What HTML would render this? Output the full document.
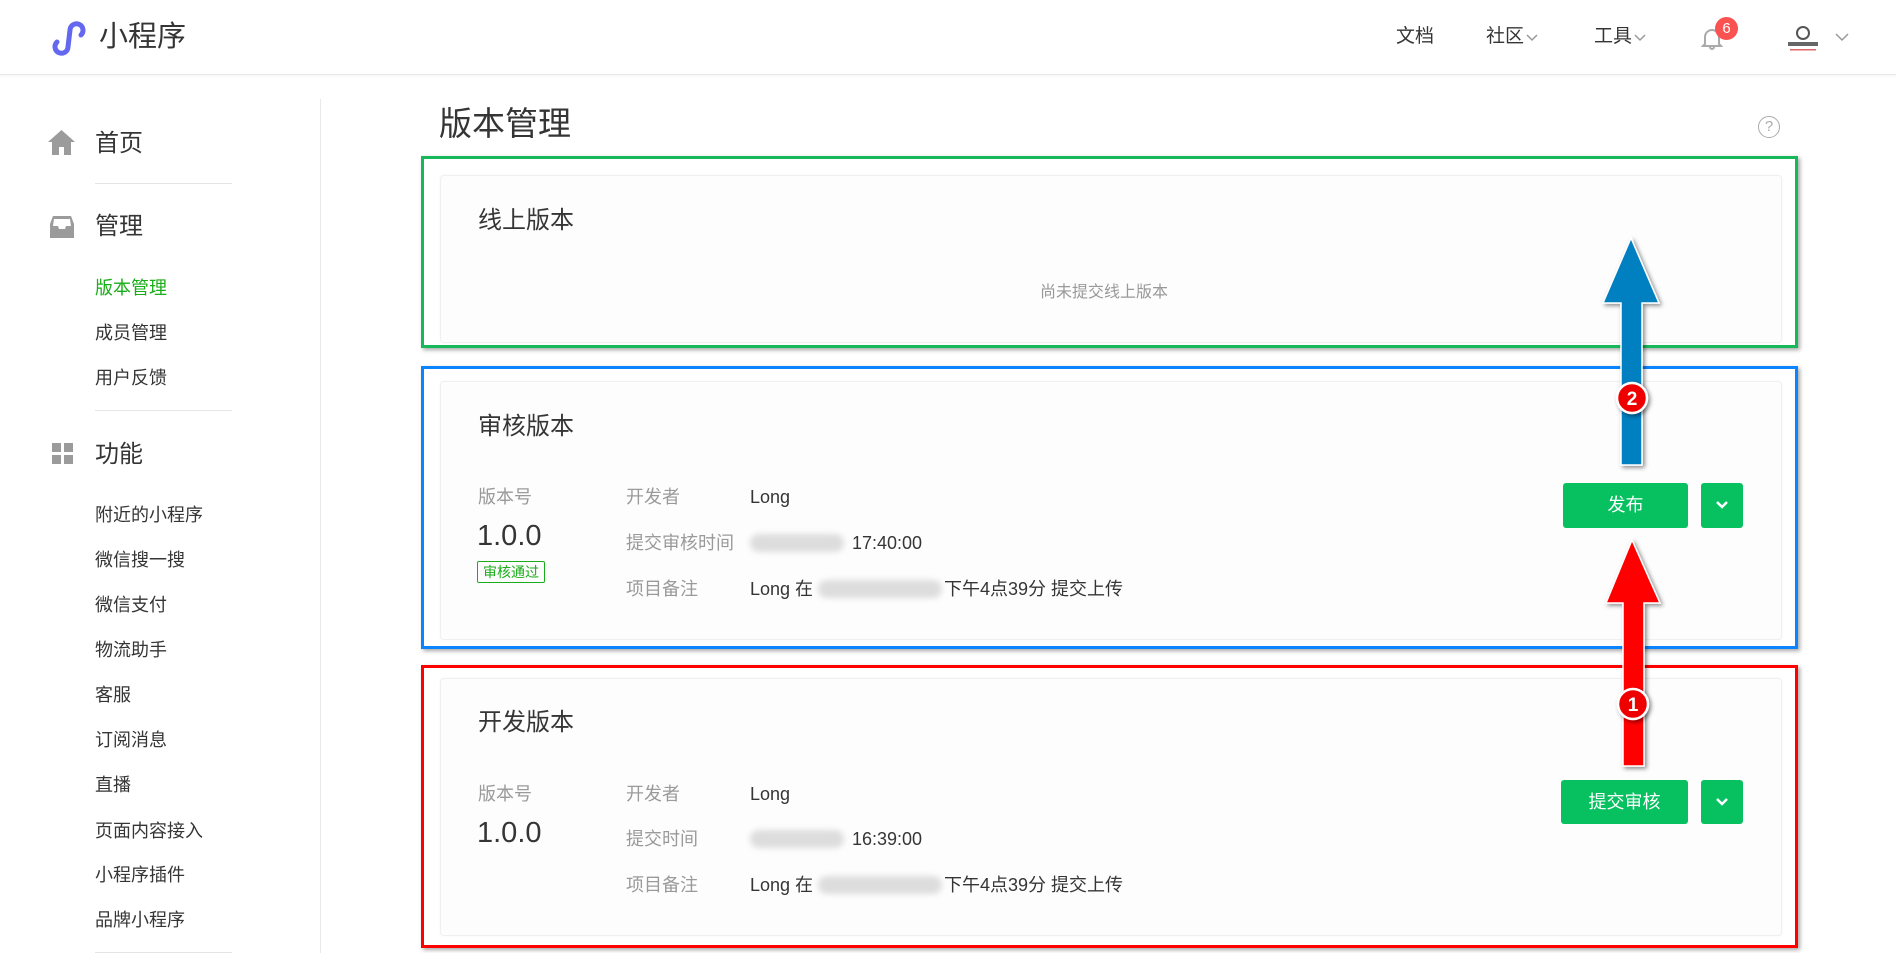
<!DOCTYPE html>
<html><head><meta charset="utf-8">
<style>
*{margin:0;padding:0;box-sizing:border-box}
body{width:1896px;height:953px;overflow:hidden;background:#fff;font-family:"Liberation Sans","Noto Sans CJK SC",sans-serif;color:#353535;position:relative}
.a{position:absolute;white-space:nowrap}
.hdr{position:absolute;left:0;top:0;width:1896px;height:75px;background:#fff;border-bottom:1px solid #e7e7e7;box-shadow:0 1px 3px rgba(0,0,0,.05)}
.side{font-size:18px;color:#353535;line-height:20px}
.card{position:absolute;background:#fdfdfd;border:1px solid #f0f0f0;border-radius:4px;box-shadow:0 0 3px rgba(0,0,0,.04)}
.lbl{color:#9a9a9a;font-size:18px;line-height:20px}
.val{color:#353535;font-size:18px;line-height:20px}
.blur{position:absolute;height:18px;background:#ddd;border-radius:9px;filter:blur(3px)}
.btn{position:absolute;background:#07c160;border-radius:3px;color:#fff;font-size:18px;text-align:center}
.box{position:absolute;border:3px solid;box-shadow:2px 2px 4px rgba(0,0,0,.35)}
</style></head><body>

<div class="hdr"></div>
<svg class="a" style="left:52px;top:20px" width="34" height="36" viewBox="0 0 34 36"><path d="M5,22 A6.5,6.5 0 1 0 16,27 L18,10 A6.5,6.5 0 1 1 29,15" fill="none" stroke="#6467f0" stroke-width="5" stroke-linecap="round"/></svg>
<div class="a" style="left:99px;top:20px;font-size:29px;line-height:34px;color:#353535">小程序</div>

<div class="a" style="left:1396px;top:26px;font-size:19px;line-height:22px">文档</div>
<div class="a" style="left:1486px;top:26px;font-size:19px;line-height:22px">社区</div>
<svg class="a" style="left:1526px;top:34px" width="12" height="8"><path d="M1,1 L6,6 L11,1" fill="none" stroke="#999" stroke-width="1.5"/></svg>
<div class="a" style="left:1594px;top:26px;font-size:19px;line-height:22px">工具</div>
<svg class="a" style="left:1634px;top:34px" width="12" height="8"><path d="M1,1 L6,6 L11,1" fill="none" stroke="#999" stroke-width="1.5"/></svg>
<svg class="a" style="left:1701px;top:26px" width="22" height="24" viewBox="0 0 22 24"><path d="M4,18 L4,11 A7,7 0 0 1 18,11 L18,18 L20,20 L2,20 Z M9,21 A2,2 0 0 0 13,21" fill="none" stroke="#aaa" stroke-width="2"/></svg>
<div class="a" style="left:1715px;top:17px;width:23px;height:23px;border-radius:50%;background:#fa5151;color:#fff;font-size:15px;line-height:23px;text-align:center">6</div>
<svg class="a" style="left:1784px;top:24px" width="38" height="30"><circle cx="19" cy="9" r="6" fill="none" stroke="#555" stroke-width="2"/><rect x="4" y="18" width="30" height="4" fill="#666"/><rect x="6" y="25" width="26" height="1.5" fill="#d66"/></svg>
<svg class="a" style="left:1835px;top:33px" width="14" height="9"><path d="M1,1 L7,7 L13,1" fill="none" stroke="#999" stroke-width="1.5"/></svg>

<!-- sidebar -->
<div class="a" style="left:320px;top:99px;width:1px;height:854px;background:#e8e8e8"></div>
<svg class="a" style="left:48px;top:130px" width="27" height="25" viewBox="0 0 27 25"><path d="M13.5,0 L27,12 L23,12 L23,25 L16,25 L16,17 L11,17 L11,25 L4,25 L4,12 L0,12 Z" fill="#9b9b9b"/></svg>
<div class="a" style="left:95px;top:131px;font-size:24px;line-height:26px">首页</div>
<div class="a" style="left:95px;top:183px;width:137px;height:1px;background:#e5e5e5"></div>
<svg class="a" style="left:50px;top:216px" width="24" height="22" viewBox="0 0 24 22"><path d="M3,0 L21,0 L24,8 L24,22 L0,22 L0,8 Z" fill="#9b9b9b"/><path d="M4,3 L20,3 L21,10 L16,10 L15,13 L9,13 L8,10 L3,10 Z" fill="#fff"/></svg>
<div class="a" style="left:95px;top:214px;font-size:24px;line-height:26px">管理</div>
<div class="a side" style="left:95px;top:278px;color:#1aad19">版本管理</div>
<div class="a side" style="left:95px;top:323px">成员管理</div>
<div class="a side" style="left:95px;top:368px">用户反馈</div>
<div class="a" style="left:95px;top:410px;width:137px;height:1px;background:#e5e5e5"></div>
<svg class="a" style="left:52px;top:443px" width="22" height="22"><rect x="0" y="0" width="9" height="9" fill="#9b9b9b"/><rect x="12" y="0" width="9" height="9" fill="#9b9b9b"/><rect x="0" y="12" width="9" height="9" fill="#9b9b9b"/><rect x="12" y="12" width="9" height="9" fill="#9b9b9b"/></svg>
<div class="a" style="left:95px;top:442px;font-size:24px;line-height:26px">功能</div>
<div class="a side" style="left:95px;top:505px">附近的小程序</div>
<div class="a side" style="left:95px;top:550px">微信搜一搜</div>
<div class="a side" style="left:95px;top:595px">微信支付</div>
<div class="a side" style="left:95px;top:640px">物流助手</div>
<div class="a side" style="left:95px;top:685px">客服</div>
<div class="a side" style="left:95px;top:730px">订阅消息</div>
<div class="a side" style="left:95px;top:775px">直播</div>
<div class="a side" style="left:95px;top:821px">页面内容接入</div>
<div class="a side" style="left:95px;top:865px">小程序插件</div>
<div class="a side" style="left:95px;top:910px">品牌小程序</div>
<div class="a" style="left:95px;top:952px;width:137px;height:1px;background:#e5e5e5"></div>

<!-- main -->
<div class="a" style="left:439px;top:105px;font-size:33px;line-height:38px;color:#353535">版本管理</div>
<div class="a" style="left:1758px;top:116px;width:22px;height:22px;border:1.5px solid #aaa;border-radius:50%;color:#aaa;font-size:15px;line-height:19px;text-align:center">?</div>

<!-- online card -->
<div class="card" style="left:440px;top:175px;width:1342px;height:168px"></div>
<div class="a" style="left:478px;top:208px;font-size:24px;line-height:26px">线上版本</div>
<div class="a" style="left:1040px;top:283px;font-size:16px;line-height:20px;color:#999">尚未提交线上版本</div>
<div class="box" style="left:421px;top:156px;width:1377px;height:192px;border-color:#17b859"></div>

<!-- review card -->
<div class="card" style="left:440px;top:381px;width:1342px;height:259px"></div>
<div class="a" style="left:478px;top:414px;font-size:24px;line-height:26px">审核版本</div>
<div class="a lbl" style="left:478px;top:487px">版本号</div>
<div class="a" style="left:477px;top:520px;font-size:29px;line-height:32px;color:#353535">1.0.0</div>
<div class="a" style="left:477px;top:561px;width:68px;height:22px;border:1px solid #1aad19;border-radius:2px;color:#1aad19;font-size:14px;line-height:20px;text-align:center">审核通过</div>
<div class="a lbl" style="left:626px;top:487px">开发者</div>
<div class="a val" style="left:750px;top:487px">Long</div>
<div class="a lbl" style="left:626px;top:533px">提交审核时间</div>
<div class="blur" style="left:750px;top:534px;width:94px"></div>
<div class="a val" style="left:852px;top:533px">17:40:00</div>
<div class="a lbl" style="left:626px;top:579px">项目备注</div>
<div class="a val" style="left:750px;top:579px">Long 在</div>
<div class="blur" style="left:818px;top:580px;width:124px"></div>
<div class="a val" style="left:944px;top:579px">下午4点39分 提交上传</div>
<div class="btn" style="left:1563px;top:483px;width:125px;height:45px;line-height:45px">发布</div>
<div class="btn" style="left:1701px;top:483px;width:42px;height:45px"><svg style="margin-top:17px" width="14" height="10"><path d="M2,2 L7,7 L12,2" fill="none" stroke="#fff" stroke-width="2.5"/></svg></div>
<div class="box" style="left:421px;top:366px;width:1377px;height:283px;border-color:#0a84ff"></div>

<!-- dev card -->
<div class="card" style="left:440px;top:678px;width:1342px;height:258px"></div>
<div class="a" style="left:478px;top:710px;font-size:24px;line-height:26px">开发版本</div>
<div class="a lbl" style="left:478px;top:784px">版本号</div>
<div class="a" style="left:477px;top:817px;font-size:29px;line-height:32px;color:#353535">1.0.0</div>
<div class="a lbl" style="left:626px;top:784px">开发者</div>
<div class="a val" style="left:750px;top:784px">Long</div>
<div class="a lbl" style="left:626px;top:829px">提交时间</div>
<div class="blur" style="left:750px;top:830px;width:94px"></div>
<div class="a val" style="left:852px;top:829px">16:39:00</div>
<div class="a lbl" style="left:626px;top:875px">项目备注</div>
<div class="a val" style="left:750px;top:875px">Long 在</div>
<div class="blur" style="left:818px;top:876px;width:124px"></div>
<div class="a val" style="left:944px;top:875px">下午4点39分 提交上传</div>
<div class="btn" style="left:1561px;top:780px;width:127px;height:44px;line-height:44px">提交审核</div>
<div class="btn" style="left:1701px;top:780px;width:42px;height:44px"><svg style="margin-top:17px" width="14" height="10"><path d="M2,2 L7,7 L12,2" fill="none" stroke="#fff" stroke-width="2.5"/></svg></div>
<div class="box" style="left:421px;top:665px;width:1377px;height:283px;border-color:#ff0000"></div>

<!-- arrows -->
<svg class="a" style="left:0;top:0" width="1896" height="953">
<defs><filter id="sh" x="-50%" y="-20%" width="200%" height="140%"><feDropShadow dx="2" dy="2" stdDeviation="2" flood-color="#000" flood-opacity=".45"/></filter></defs>
<path d="M1621,465 L1621,303 L1603,303 L1631,238 L1659,303 L1642,303 L1642,465 Z" fill="#0080c0" stroke="#fff" stroke-width="1.5" filter="url(#sh)"/>
<path d="M1623,766 L1623,603 L1606,603 L1632,540 L1660,603 L1644,603 L1644,766 Z" fill="#ff0000" stroke="#fff" stroke-width="1.5" filter="url(#sh)"/>
<g filter="url(#sh)"><circle cx="1632" cy="398" r="15" fill="#e00" stroke="#fff" stroke-width="2.5"/><circle cx="1633" cy="704" r="15" fill="#e00" stroke="#fff" stroke-width="2.5"/></g>
<text x="1632" y="405" fill="#fff" font-size="19" font-weight="bold" text-anchor="middle" font-family="Liberation Sans, sans-serif">2</text>
<text x="1633" y="711" fill="#fff" font-size="19" font-weight="bold" text-anchor="middle" font-family="Liberation Sans, sans-serif">1</text>
</svg>
</body></html>
